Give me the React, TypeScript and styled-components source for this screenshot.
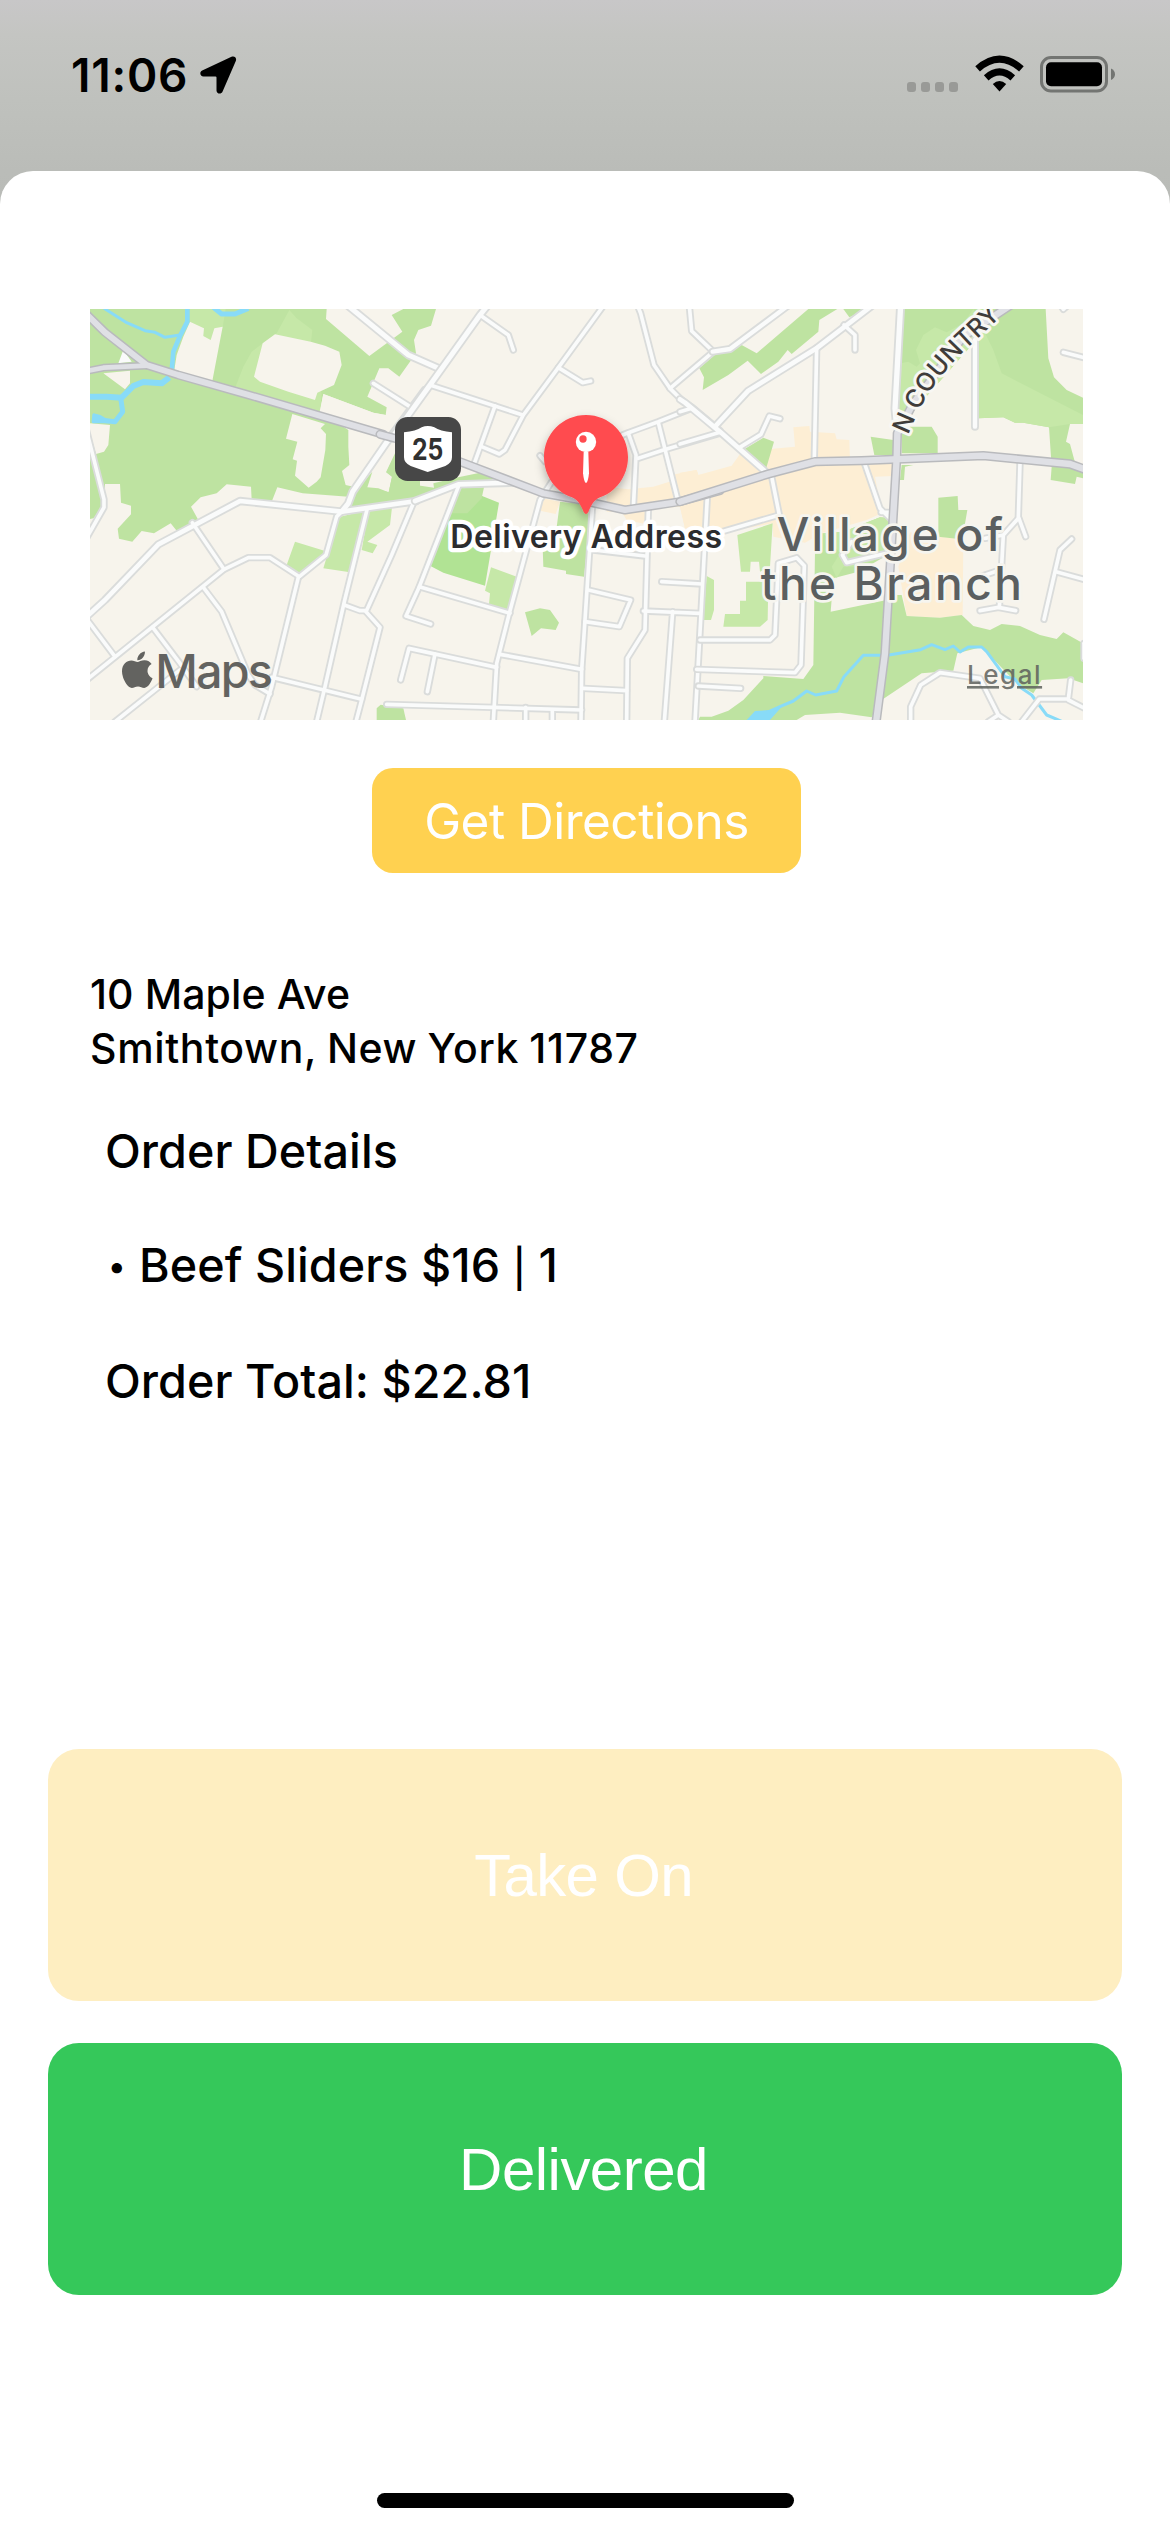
import React from "react";
import styled, { createGlobalStyle } from "styled-components";

const GlobalStyle = createGlobalStyle`
  * { box-sizing: border-box; }
  body { margin: 0; background: #fff; }
`;

const Screen = styled.main`
  display: flex;
  flex-direction: column;
  width: 1170px;
  height: 2532px;
  overflow: hidden;
  background: linear-gradient(to bottom, #c8c7c8 0, #c4c5c2 35px, #bfc1bd 100px, #babcb8 171px, #b9bbb7 210px, #fff 210px);
  color: #000;
  font-family: Inter, "Liberation Sans", sans-serif;
`;

const StatusBar = styled.header`
  display: flex;
  align-items: center;
  justify-content: space-between;
  flex: none;
  height: 171px;
  padding: 0 55px 22px 71px;
`;

const StatusGroup = styled.div`
  display: flex;
  align-items: center;
`;

const Clock = styled.time`
  margin-right: 12px;
  font-size: 46px;
  font-weight: 600;
  line-height: 56px;
  letter-spacing: 0.8px;
`;

const CellularDots = styled.div`
  display: flex;
  gap: 5px;
  margin: 24px 17px 0 0;
`;

const CellularDot = styled.i`
  width: 9px;
  height: 10px;
  border-radius: 3px;
  background: #999a97;
`;

const WifiSlot = styled.span`
  display: flex;
  margin: 0 16px 3px 0;
`;

const Sheet = styled.section`
  display: flex;
  flex: 1;
  flex-direction: column;
  padding-top: 138px;
  border-radius: 33px 33px 0 0;
  background: #fff;
`;

const MapFrame = styled.div`
  flex: none;
  width: 993px;
  height: 411px;
  margin-left: 90px;
  svg { display: block; }
`;

const DirectionsButton = styled.button`
  flex: none;
  width: 429px;
  height: 105px;
  margin: 48px 0 0 372px;
  padding: 0;
  border: 0;
  border-radius: 21px;
  background: #ffd150;
  color: #fff;
  font: 400 49.5px/60px Inter, sans-serif;
  letter-spacing: -0.51px;
`;

const Address = styled.address`
  margin: 94px 0 0 90px;
  font-size: 41px;
  font-style: normal;
  font-weight: 500;
  line-height: 54px;
`;

const AddressLine = styled.div<{ $tracking: number; $wordGap?: number }>`
  letter-spacing: ${(p) => p.$tracking}px;
  word-spacing: ${(p) => p.$wordGap ?? 0}px;
`;

const Order = styled.section`
  display: flex;
  flex-direction: column;
  gap: 57px;
  margin: 47px 0 0 105px;
  font-size: 46.7px;
  font-weight: 500;
`;

const OrderText = styled.p`
  display: flex;
  align-items: center;
  height: 58px;
  margin: 0;
  line-height: 58px;
  letter-spacing: 0.06px;
  white-space: pre;
`;

const Bullet = styled.span`
  width: 34px;
  padding-left: 3px;
  font-size: 33px;
`;

const Divider = styled.span`
  font-size: 38px;
`;

const Actions = styled.div`
  display: flex;
  flex-direction: column;
  gap: 42px;
  margin: auto 48px 198px;
`;

const ActionButton = styled.button<{ $color: string; $tracking: number }>`
  height: 252px;
  padding: 2px 3px 0 0;
  border: 0;
  border-radius: 31px;
  background: ${(p) => p.$color};
  color: #fff;
  font: 400 60px/70px "Liberation Sans", Arial, sans-serif;
  letter-spacing: ${(p) => p.$tracking}px;
`;

const HomeIndicator = styled.div`
  flex: none;
  width: 417px;
  height: 15px;
  margin: 0 0 24px 377px;
  border-radius: 8px;
  background: #000;
`;

type Shape = { fill: string; d: string };
type Road = { d: string; width?: number };
type Tile = { x: number; areas: Shape[]; water: Road[]; streets: Road[]; highways: Road[] };

const GREEN = "#bee3a1";
const LIGHT = "#c6e8a8";
const PARK = "#b1e394";
const LAND = "#f7f4ec";
const TOWN = "#fdeed4";
const WATER = "#88dbf8";

const tiles: Tile[] = [
  {
    x: -30,
    areas: [
      { fill: GREEN, d: "M30,27H740L738,57 868,168 967,95 935,45 970,27H1068L1053,77 1015,90 1002,120 1008,160 958,230 925,205 898,205 862,290 920,322 917,345 880,338 730,282 720,335 805,390 805,440 808,495 786,513 797,555 820,560 805,590 668,580 592,562 575,605 515,600 513,560 440,553 410,580 362,592 333,620 355,660 290,692 272,670 222,700 185,693 157,725 117,716 113,686 153,643 153,617 123,608 120,552 75,552 72,620 40,655 30,657Z" },
      { fill: LIGHT, d: "M628,30L650,55 697,90 693,128 725,282 720,335 466,262 490,200 515,155 548,130 590,100Z" },
      { fill: LIGHT, d: "M330,27H437L428,82 403,85 392,120 370,108 372,85 330,65Z" },
      { fill: LAND, d: "M330,65L372,85 370,108 392,120 403,85 428,80 397,243 283,210 290,165 310,110Z" },
      { fill: LAND, d: "M585,103L692,125 735,137 778,155 785,195 762,255 712,278 705,300 625,275 540,245 522,230 548,130Z" },
      { fill: LAND, d: "M730,282L880,338 917,345 925,400 718,340Z" },
      { fill: LAND, d: "M637,342L735,372 722,385 738,402 736,450 722,532 710,545 686,563 645,527 651,482 638,478 652,425 618,416Z" },
      { fill: LAND, d: "M70,220L150,212V250L135,268Z M30,370L90,375 85,435 72,455 48,462 30,400Z" },
      { fill: "#fafbfb", d: "M130,150L155,185 115,190Z" },
      { fill: GREEN, d: "M945,460L918,517 936,530 926,577 895,565 862,562 877,515 820,580 805,625 1020,600V460Z" },
      { fill: LIGHT, d: "M775,652L862,630 805,816 730,805 742,765Z M866,630L936,622 930,675 862,725 892,735 878,760 845,750Z M645,725L733,752 735,768 660,825 620,795Z" },
      { fill: GREEN, d: "M890,1260V1225L902,1214 970,1225 978,1260Z" },
    ],
    water: [
      { d: "M322,20V65L300,108 280,155 275,215", width: 14 },
      { d: "M72,25L140,68 195,92 225,97 255,112 300,105", width: 9 },
      { d: "M268,232L245,250 190,246 160,258 125,293 80,290 25,290", width: 18 },
      { d: "M122,293L128,335 105,365 42,358", width: 15 },
      { d: "M42,345L60,350 85,365H40Z", width: 10 },
      { d: "M400,22L425,42H465L505,25", width: 15 },
    ],
    streets: [
      { d: "M18,385L72,598V622L22,710" },
      { d: "M22,948L75,900 235,733 480,603 785,635 1010,603", width: 14 },
      { d: "M337,668L432,808" },
      { d: "M22,1138L432,808 505,773H570L658,830 738,765 770,650 795,625" },
      { d: "M785,635L805,610 818,575 925,420 1035,270", width: 15 },
      { d: "M655,832L575,1160 542,1265" },
      { d: "M370,862L425,935 505,1125 525,1155 570,1182" },
      { d: "M218,982L300,1090 350,1160" },
      { d: "M22,960L105,1070" },
      { d: "M105,1265L300,1110" },
      { d: "M862,625L793,905 735,1160 710,1265" },
      { d: "M1000,610L935,765 858,935 900,982 845,1200 828,1265" },
      { d: "M793,915L840,932H858" },
      { d: "M575,1132L845,1198" },
      { d: "M805,18L985,165 1075,205", width: 15 },
      { d: "M880,250L990,320" },
    ],
    highways: [
      { d: "M22,45L75,97 200,195 295,225 500,283 910,403", width: 18 },
      { d: "M22,213L70,203 200,197", width: 14 },
    ],
  },
  {
    x: 870,
    areas: [
      { fill: GREEN, d: "M45,465L20,515 36,530 26,577 0,570V612L105,605 235,555 400,545 300,518 235,532 160,550 162,563 107,555 105,540H45Z" },
      { fill: PARK, d: "M240,560L312,590 357,608 315,857 190,818 150,797Z" },
      { fill: GREEN, d: "M240,565L312,562 305,595 262,640H205Z" },
      { fill: LIGHT, d: "M333,802L410,830 385,930 327,912 330,880 315,872Z" },
      { fill: GREEN, d: "M435,937L480,925 510,930 537,968 527,990 483,985 455,1008Z M540,605L635,615 612,830 558,822V812L490,800 488,740 525,720Z" },
      { fill: TOWN, d: "M488,595L540,605 527,642 480,632Z M680,560L745,568 820,560 885,540V523L950,510 955,525 1020,515V685H915L900,620 795,628V672L740,660 725,635H680Z" },
    ],
    water: [],
    streets: [
      { d: "M340,-5L300,45 150,255 35,415", width: 15 },
      { d: "M300,45L385,105 400,150" },
      { d: "M150,255L428,345" },
      { d: "M345,318L283,490" },
      { d: "M672,15L535,203 430,345 375,450 358,462 305,440" },
      { d: "M535,203L608,248 632,243" },
      { d: "M480,467L495,485" },
      { d: "M105,603L235,553 400,548", width: 14 },
      { d: "M515,545L480,600 388,940 350,1090 340,1265" },
      { d: "M235,560L118,860 78,948 152,972" },
      { d: "M118,860L390,940" },
      { d: "M62,1140L87,1045 350,1102" },
      { d: "M165,1062L142,1175" },
      { d: "M20,1213L605,1230" },
      { d: "M437,1222V1265M517,1230V1265" },
      { d: "M360,1063L605,1108" },
      { d: "M637,625L615,960 605,1110 603,1265" },
      { d: "M625,870L752,900 718,980 615,965" },
      { d: "M610,1165L740,1172" },
      { d: "M805,628L795,990 742,1075 740,1265" },
      { d: "M640,750L795,768" },
      { d: "M845,845L965,852" },
      { d: "M790,933L960,940M878,935L853,1265" },
      { d: "M982,590L962,960 945,1265" },
      { d: "M772,15L782,40 822,195 870,265 905,300 940,325 1020,392" },
      { d: "M870,265L1000,155 935,93 928,18" },
      { d: "M728,405L745,398 835,365 935,325" },
      { d: "M775,475L850,450 1020,400" },
      { d: "M835,368L892,595" },
      { d: "M745,400L768,465 760,625" },
    ],
    highways: [{ d: "M0,403L45,415 240,485 490,580 600,600 735,630 900,605 1020,572", width: 18 }],
  },
  {
    x: 1770,
    areas: [
      { fill: TOWN, d: "M0,518L50,510 55,525 155,497 185,455 345,440 340,382 388,378 390,395 465,400 470,418 508,420 510,480 640,490V528L585,530 605,640 560,660 425,700 375,728 280,710 278,670 130,697 15,685 0,620Z" },
      { fill: TOWN, d: "M690,697L775,710 850,715 848,945 780,953 680,948 655,800Z" },
      { fill: GREEN, d: "M385,27H472L418,60 415,95 335,162 323,150 295,185 243,222 203,182 145,225 68,270 72,232 58,205 110,160 185,135 230,160Z" },
      { fill: GREEN, d: "M490,27H565L508,52Z" },
      { fill: GREEN, d: "M668,27H1097L1105,175 1122,232 1160,270 1209,293V372H1170L1158,425 1170,432 1187,495 1209,510V535L1190,530 1185,552 1112,540 1115,500 1107,382 1030,368H1005L970,352 895,355V150L880,130 690,345 650,370Z" },
      { fill: LIGHT, d: "M880,27L940,150 965,220 1209,345V372H1170L1107,382 1030,368H1005L970,352 895,355V150L880,130 690,345 650,370 660,190 685,185 710,200 720,190 708,150 730,105 765,82 800,97 850,70Z" },
      { fill: GREEN, d: "M690,380L755,380 773,410V460H665V400Z M572,410L640,420V465H583Z M665,495H705L700,495 675,500 672,540H660Z" },
      { fill: GREEN, d: "M180,455L250,413 282,425 257,510Z M775,593L833,588 835,630H862L848,712 830,716 775,710Z" },
      { fill: LIGHT, d: "M172,705L278,670 270,800 240,815 237,785H212L210,815H183Z M198,845H265L263,960 240,980H130L135,942H180V902H198Z M80,828L102,840V930L93,960H70Z" },
      { fill: GREEN, d: "M425,700L490,695 600,652 632,655V760L535,815 460,835 452,935 620,900 650,885H665L680,948 780,953 845,945 880,978 930,990 965,972 1020,978 1080,1005 1130,1017 1150,997 1209,1030V1150L1165,1135 1085,1140 1060,1180 1010,1150 905,1041 832,1060 820,1112 725,1120 605,1200 575,1252 480,1238 375,1245 350,1260H55L60,1250H95L145,1232 190,1200 250,1135V1128L370,1137 400,1095 405,750Z" },
      { fill: LIGHT, d: "M430,700L490,695 600,652 632,655V760L535,800 490,800 470,835 455,800 480,760Z" },
      { fill: WATER, d: "M200,1260L225,1233 270,1230 310,1215 270,1260Z" },
    ],
    water: [
      { d: "M260,1238L300,1220 340,1203 380,1173 407,1185 470,1173 492,1130 550,1066H622L722,1049 755,1034 795,1049 820,1038 840,1056 865,1041H905L920,1055 975,1130 1005,1137 1025,1165 1055,1185 1100,1245 1145,1264", width: 9 },
    ],
    streets: [
      { d: "M98,155L150,147 320,20", width: 13 },
      { d: "M0,298L15,308 122,397 260,518", width: 14 },
      { d: "M0,432L120,397" },
      { d: "M0,335L35,325" },
      { d: "M105,380L205,272 412,143 575,18", width: 14 },
      { d: "M410,143L403,475" },
      { d: "M492,75L525,105V150" },
      { d: "M178,443L243,403 268,348 300,356" },
      { d: "M662,15L645,325 650,380", width: 16 },
      { d: "M885,120V380", width: 13 },
      { d: "M1145,20L1150,28 1165,15" },
      { d: "M1150,157L1220,175" },
      { d: "M550,480L600,625 635,660M603,637H635" },
      { d: "M275,530L298,645 115,698" },
      { d: "M1020,490L1015,650 1037,710" },
      { d: "M1015,655L970,705 958,922M970,705L915,715" },
      { d: "M900,932L955,922 1007,932M960,810L900,830" },
      { d: "M1092,958L1140,750 1175,717M1128,815L1218,840" },
      { d: "M60,1020H270L285,1005 295,790 350,773 373,797 363,1095 345,1118 50,1108" },
      { d: "M55,1158L182,1165" },
      { d: "M487,765L500,788 620,760M490,760L515,725" },
      { d: "M692,1265V1220L722,1155 780,1118 900,1135 955,1245 985,1265M955,1245L925,1265" },
      { d: "M1025,1265L1078,1197H1165L1172,1140M1165,1200L1220,1228" },
      { d: "M1212,1030V1075" },
    ],
    highways: [
      { d: "M588,1268L615,1060 650,475 652,400 700,310 850,110 1000,10", width: 19 },
      { d: "M0,605L265,522 405,485 545,482 910,467 1170,492 1220,510", width: 19 },
    ],
  },
];

const MapLabel = styled.text<{ $size: number; $color: string; $tracking: number; $halo: string; $weight?: number }>`
  font-family: Inter, sans-serif;
  font-size: ${(p) => p.$size}px;
  font-weight: ${(p) => p.$weight ?? 600};
  letter-spacing: ${(p) => p.$tracking}px;
  fill: ${(p) => p.$color};
  stroke: ${(p) => p.$halo};
  stroke-linejoin: round;
  paint-order: stroke;
`;

const PlainLabel = styled.text<{ $size: number; $tracking: number; $weight?: number }>`
  font-family: Inter, sans-serif;
  font-size: ${(p) => p.$size}px;
  font-weight: ${(p) => p.$weight ?? 500};
  letter-spacing: ${(p) => p.$tracking}px;
`;

function Roads({ roads, casing, fill, edge }: { roads: Road[]; casing: string; fill: string; edge: number }) {
  const base = { fill: "none", strokeLinecap: "round" as const, strokeLinejoin: "round" as const };
  return (
    <>
      {roads.map((r) => <path key={"c" + r.d} d={r.d} {...base} stroke={casing} strokeWidth={(r.width ?? 11) + edge} />)}
      {roads.map((r) => <path key={"f" + r.d} d={r.d} {...base} stroke={fill} strokeWidth={r.width ?? 11} />)}
    </>
  );
}

function DeliveryMap() {
  const shift = (t: Tile) => `translate(${t.x} -27)`;
  return (
    <svg width="993" height="411" viewBox="0 0 2979 1233" role="img" aria-label="Map of the delivery address">
      <defs>
        <filter id="pinShadow" x="-40%" y="-40%" width="180%" height="180%">
          <feDropShadow dx="0" dy="14" stdDeviation="14" floodColor="#000" floodOpacity="0.3" />
        </filter>
        <path id="countryRoad" d="M2454,378L2476,328Q2503,268 2550,206Q2595,150 2655,96L2800,-42" />
        {tiles.map((t, i) => (
          <clipPath id={`tile${i}`} key={i}>
            <rect x={[30, 0, 0][i]} y="27" width={[1040, 1020, 1209][i]} height="1233" />
          </clipPath>
        ))}
      </defs>
      <rect width="2979" height="1233" fill={LAND} />
      {tiles.map((t, i) => (
        <g key={t.x} transform={shift(t)} clipPath={`url(#tile${i})`}>
          {t.areas.map((a) => <path key={a.d} d={a.d} fill={a.fill} />)}
          {t.water.map((w) => (
            <path key={w.d} d={w.d} fill="none" stroke={WATER} strokeWidth={w.width} strokeLinejoin="round" />
          ))}
        </g>
      ))}
      {tiles.map((t) => (
        <g key={t.x} transform={shift(t)}>
          <Roads roads={t.streets} casing="#dadcdb" fill="#fafbfb" edge={11} />
        </g>
      ))}
      {tiles.map((t) => (
        <g key={t.x} transform={shift(t)}>
          <Roads roads={t.highways} casing="#b9babd" fill="#dfe0e5" edge={9} />
        </g>
      ))}

      <MapLabel $size={76} $weight={500} $color="#3f3c3a" $tracking={0.4} $halo="#f8f7f3" strokeWidth="18">
        <textPath href="#countryRoad">N COUNTRY</textPath>
      </MapLabel>
      <MapLabel x="2060" y="727" $size={138} $weight={550} $color="#5b5f60" $tracking={6.6} $halo="#f6f5ef" strokeWidth="16">Village of</MapLabel>
      <MapLabel x="2012" y="873" $size={138} $weight={550} $color="#5b5f60" $tracking={7.6} $halo="#f6f5ef" strokeWidth="16">the Branch</MapLabel>

      <g transform="translate(870 -27)">
        <rect x="45" y="351" width="198" height="192" rx="38" fill="#474747" />
        <path d="M72,397Q108,394 125,382Q143,374 163,382Q180,394 216,397V472Q216,489 196,498L143,516 92,498Q72,489 72,472Z" fill="#fff" />
        <PlainLabel x="96" y="479" $size={88} $tracking={0} $weight={700} textLength="94" lengthAdjust="spacingAndGlyphs" fill="#303030">25</PlainLabel>
        <path d="M618,345C688,345 744,401 744,471C744,530 706,577 660,592C640,600 631,622 625,636Q618,648 611,636C605,622 596,600 576,592C530,577 492,530 492,471C492,401 548,345 618,345Z" fill="#ff4b50" filter="url(#pinShadow)" />
        <path d="M611,455H625L627,520Q624,548 618,549Q612,548 609,520Z" fill="#fff" />
        <circle cx="618" cy="426" r="30.500" fill="#fff" />
        <circle cx="609" cy="417" r="11" fill="#ff4b50" />
      </g>
      <MapLabel x="1081" y="718" $size={96} $color="#2c2c2e" $tracking={1.4} $halo="#fff" strokeWidth="26">Delivery Address</MapLabel>

      <g fill="#636360">
        <path
          transform="translate(95 1020) scale(0.2435)"
          d="M318.700 268.700c-.2-36.700 16.400-64.400 50-84.800-18.800-26.900-47.200-41.700-84.700-44.600-35.500-2.800-74.300 20.700-88.500 20.700-15 0-49.400-19.700-76.400-19.700C63.300 141.200 4 184.800 4 273.500q0 39.300 14.400 81.200c12.800 36.700 59 126.700 107.200 125.200 25.200-.6 43-17.900 75.800-17.900 31.800 0 48.300 17.900 76.400 17.900 48.600-.7 90.400-82.500 102.600-119.300-65.200-30.700-61.700-90-61.700-91.900zm-56.600-164.200c27.300-32.400 24.800-61.900 24-72.500-24.100 1.400-52 16.400-67.900 34.900-17.500 19.800-27.800 44.300-25.600 71.900 26.100 2 49.900-11.400 69.500-34.300z"
        />
        <PlainLabel x="196" y="1137" $size={140} $tracking={-5.6}>Maps</PlainLabel>
      </g>
      <PlainLabel x="2631" y="1125" $size={78} $tracking={4.6} fill="#5d605c" fillOpacity="0.85" textDecoration="underline">Legal</PlainLabel>
    </svg>
  );
}

const LocationArrow = () => (
  <svg width="37" height="38" viewBox="0 0 37 38">
    <path d="M31.500,0.800C34.500,-.5 37,2 35.800,5L22.600,35.600C21.200,38.800 16.500,38 16.500,34.500V21.500Q16.500,20.500 15.500,20.500H3.500C0,20.500 -.9,15.800 2.200,14.400Z" />
  </svg>
);

const Wifi = () => (
  <svg width="49" height="37" viewBox="0 0 49 37">
    <path d="M24.500,36.500L17.800,29Q24.500,22.800 31.200,29Z" />
    <g fill="none" stroke="#000" strokeWidth="7">
      <path d="M11.200,22.800Q24.500,11.100 37.800,22.800" />
      <path d="M2.600,13.800Q24.500,-5.600 46.400,13.800" />
    </g>
  </svg>
);

const Battery = () => (
  <svg width="75" height="37" viewBox="0 0 75 37">
    <rect x="1.500" y="1.500" width="65" height="33.500" rx="9.500" fill="none" stroke="#737572" strokeWidth="3" />
    <rect x="6" y="6.200" width="56" height="24" rx="5" />
    <path d="M71,12.500Q75,14.500 75,18.200T71,24Z" fill="#737572" />
  </svg>
);

export default function App() {
  return (
    <Screen>
      <GlobalStyle />
      <StatusBar>
        <StatusGroup>
          <Clock>11:06</Clock>
          <LocationArrow />
        </StatusGroup>
        <StatusGroup>
          <CellularDots>
            <CellularDot />
            <CellularDot />
            <CellularDot />
            <CellularDot />
          </CellularDots>
          <WifiSlot><Wifi /></WifiSlot>
          <Battery />
        </StatusGroup>
      </StatusBar>
      <Sheet>
        <MapFrame><DeliveryMap /></MapFrame>
        <DirectionsButton>Get Directions</DirectionsButton>
        <Address>
          <AddressLine $tracking={0.1}>10 Maple Ave</AddressLine>
          <AddressLine $tracking={0.65} $wordGap={-1.4}>Smithtown, New York 11787</AddressLine>
        </Address>
        <Order>
          <OrderText>Order Details</OrderText>
          <OrderText>
            <Bullet>•</Bullet>
            <span>Beef Sliders $16 <Divider>|</Divider> 1</span>
          </OrderText>
          <OrderText>Order Total: $22.81</OrderText>
        </Order>
        <Actions>
          <ActionButton $color="#feeec1" $tracking={-0.68}>Take On</ActionButton>
          <ActionButton $color="#35c85a" $tracking={-0.51}>Delivered</ActionButton>
        </Actions>
        <HomeIndicator />
      </Sheet>
    </Screen>
  );
}
